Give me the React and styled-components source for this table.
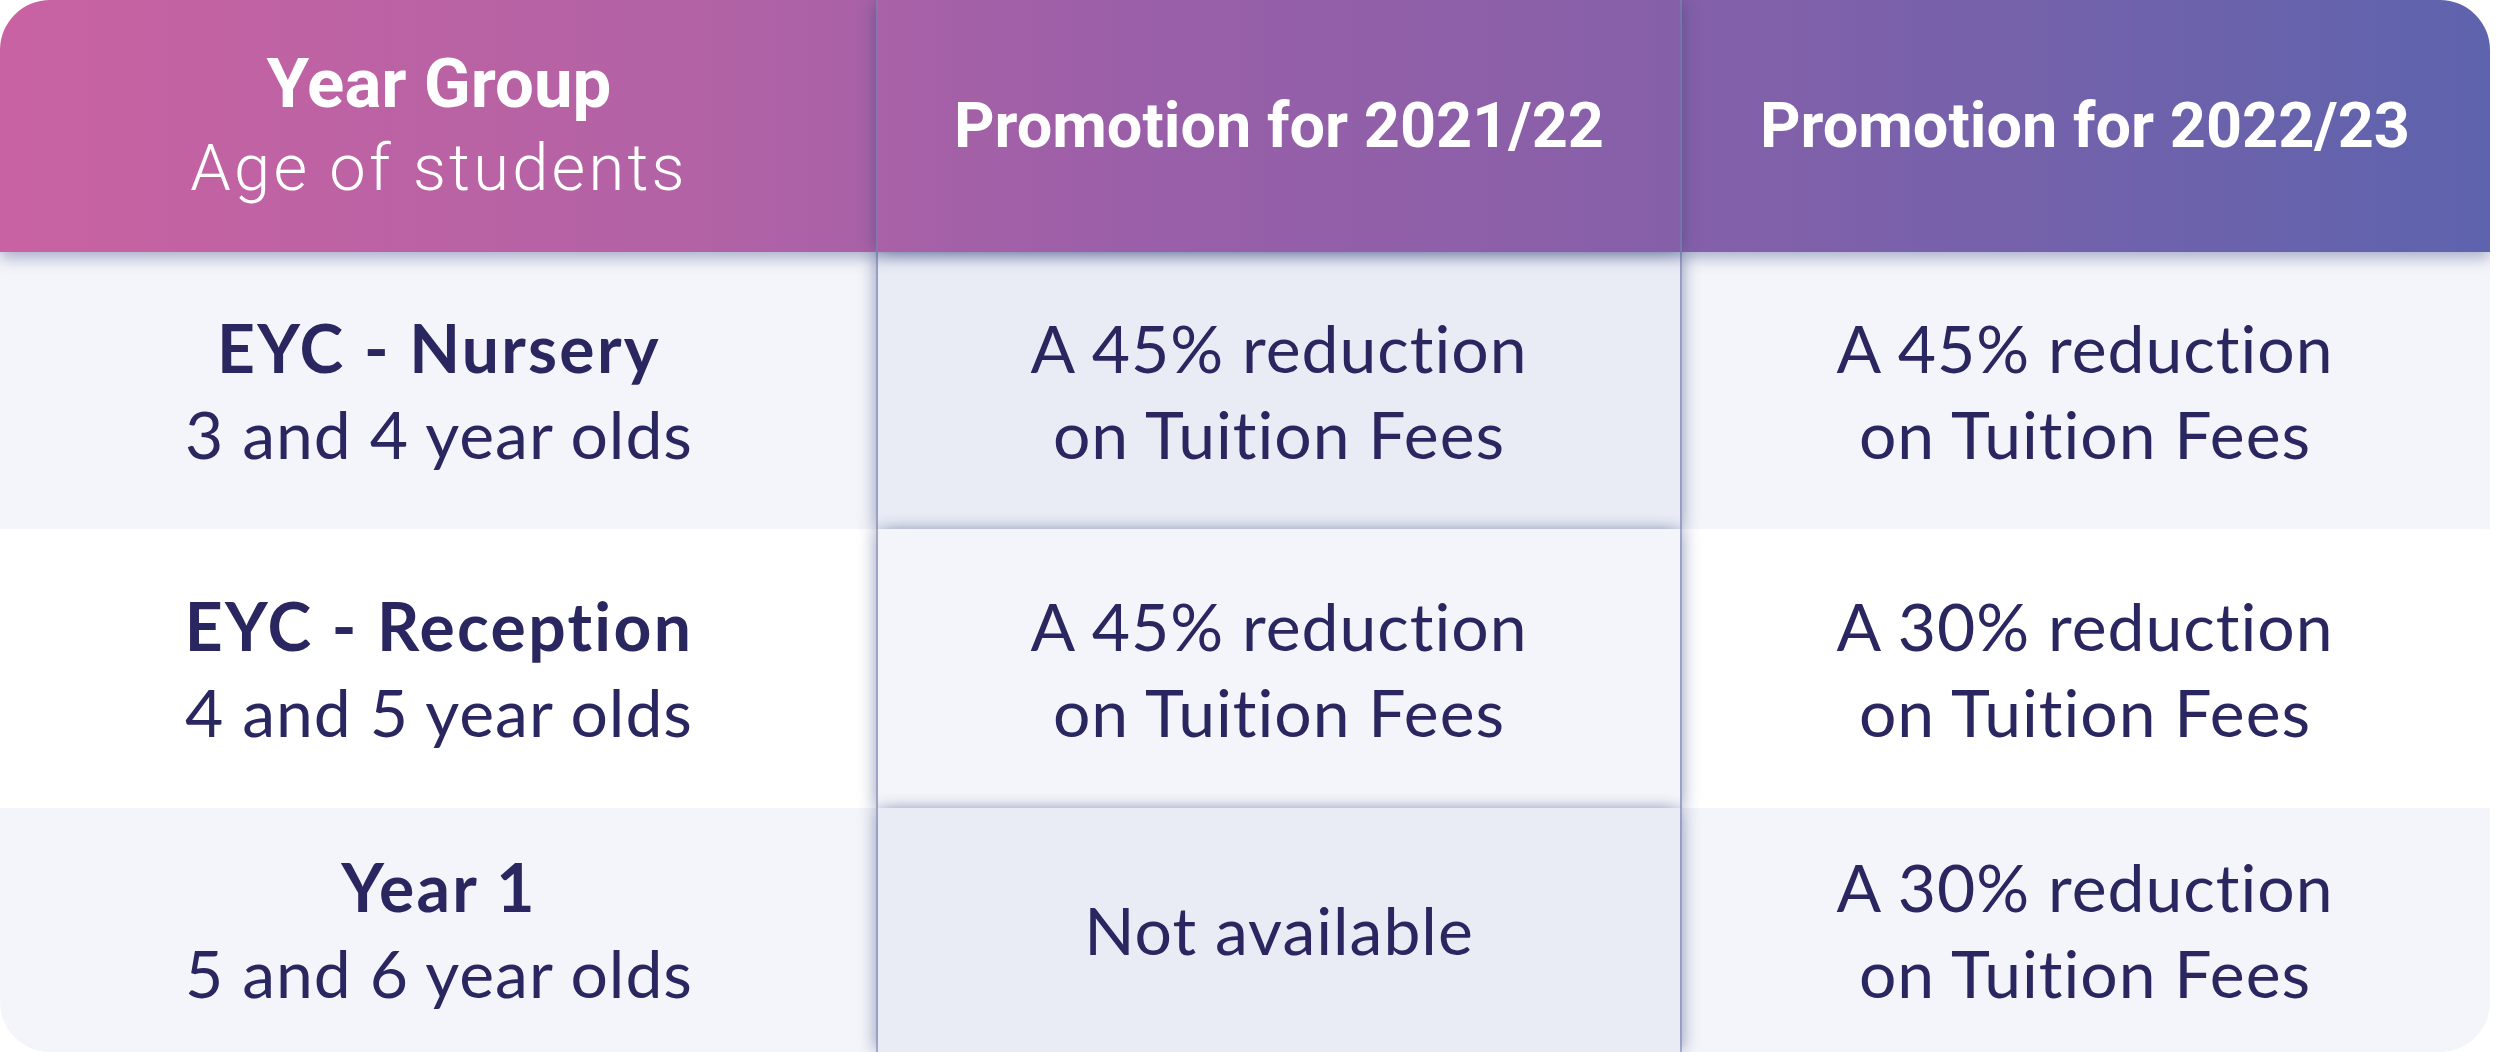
import React from 'react'
import styled, { createGlobalStyle, css } from 'styled-components'

const GlobalStyle = createGlobalStyle`
  html, body {
    margin: 0;
    padding: 0;
    background: #ffffff;
  }
`

const Table = styled.div`
  width: 2490px;
  height: 1052px;
  border-radius: 50px;
  overflow: hidden;
  display: grid;
  grid-template-rows: 252px 277px 279px 1fr;
  font-family: 'Lato', 'Open Sans', sans-serif;
  color: #2a2660;
`

const HeaderRow = styled.div`
  position: relative;
  z-index: 2;
  display: grid;
  grid-template-columns: 878px 802px 1fr;
  background: linear-gradient(90deg, #c962a2 0%, #b062a6 30%, #9b5fa8 45%, #8460a9 68%, #5e63ad 100%);
  box-shadow: 0 6px 14px rgba(60, 70, 130, 0.4);
  color: #ffffff;
  font-family: 'Roboto', 'Liberation Sans', sans-serif;
`

const highlightEdges = css`
  position: relative;
  z-index: 1;
  box-shadow:
    -2px 0 0 rgba(130, 138, 185, 0.6),
    -7px 0 14px -2px rgba(60, 70, 130, 0.38),
    2px 0 0 rgba(130, 138, 185, 0.6),
    7px 0 14px -2px rgba(60, 70, 130, 0.38);
`

const HeadCell = styled.div`
  display: flex;
  flex-direction: column;
  align-items: center;
  justify-content: center;
  text-align: center;
  line-height: 84px;
  ${p => p.$highlight && highlightEdges}
`

const HeadTitle = styled.span`
  font-size: ${p => (p.$big ? '69px' : '63px')};
  font-weight: 700;
`

const HeadSub = styled.span`
  font-size: 65px;
  font-weight: 300;
  letter-spacing: 0.05em;
`

const BodyRow = styled.div`
  display: grid;
  grid-template-columns: 878px 802px 1fr;
  background: ${p => (p.$tone === 'light' ? '#f4f5fa' : '#ffffff')};
`

const Cell = styled.div`
  display: flex;
  flex-direction: column;
  align-items: center;
  justify-content: center;
  text-align: center;
  font-size: 66px;
  font-weight: 400;
  line-height: 86px;
  letter-spacing: 0.015em;
  ${p =>
    p.$highlight &&
    css`
      background: ${p.$tone === 'light' ? '#e9ecf5' : '#f4f5fa'};
      ${highlightEdges}
    `}
`

const Strong = styled.span`
  font-weight: 700;
  letter-spacing: 0.035em;
`

const rows = [
  {
    group: 'EYC - Nursery',
    age: '3 and 4 year olds',
    now: ['A 45% reduction', 'on Tuition Fees'],
    next: ['A 45% reduction', 'on Tuition Fees'],
  },
  {
    group: 'EYC - Reception',
    age: '4 and 5 year olds',
    now: ['A 45% reduction', 'on Tuition Fees'],
    next: ['A 30% reduction', 'on Tuition Fees'],
  },
  {
    group: 'Year 1',
    age: '5 and 6 year olds',
    now: ['Not available'],
    next: ['A 30% reduction', 'on Tuition Fees'],
  },
]

export default function App() {
  return (
    <>
      <GlobalStyle />
      <Table>
        <HeaderRow>
          <HeadCell>
            <HeadTitle $big>Year Group</HeadTitle>
            <HeadSub>Age of students</HeadSub>
          </HeadCell>
          <HeadCell $highlight>
            <HeadTitle>Promotion for 2021/22</HeadTitle>
          </HeadCell>
          <HeadCell>
            <HeadTitle>Promotion for 2022/23</HeadTitle>
          </HeadCell>
        </HeaderRow>
        {rows.map((r, i) => {
          const tone = i % 2 === 0 ? 'light' : 'white'
          return (
            <BodyRow key={r.group} $tone={tone}>
              <Cell>
                <Strong>{r.group}</Strong>
                <span>{r.age}</span>
              </Cell>
              <Cell $highlight $tone={tone}>
                {r.now.map(t => <span key={t}>{t}</span>)}
              </Cell>
              <Cell>
                {r.next.map(t => <span key={t}>{t}</span>)}
              </Cell>
            </BodyRow>
          )
        })}
      </Table>
    </>
  )
}
